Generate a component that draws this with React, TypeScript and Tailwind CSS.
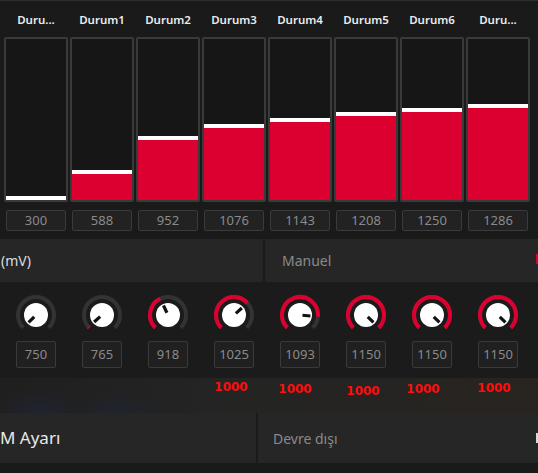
const bars = [
  { label: 'Duru...', value: 300 },
  { label: 'Durum1', value: 588 },
  { label: 'Durum2', value: 952 },
  { label: 'Durum3', value: 1076 },
  { label: 'Durum4', value: 1143 },
  { label: 'Durum5', value: 1208 },
  { label: 'Durum6', value: 1250 },
  { label: 'Duru...', value: 1286 },
];

const knobs = [750, 765, 918, 1025, 1093, 1150, 1150, 1150];

// red limit labels, slightly jittered like the original
const limits: { col: number; dx: string; dy: string }[] = [
  { col: 3, dx: '-ml-[6px]', dy: 'mt-[2px]' },
  { col: 4, dx: '-ml-[10px]', dy: 'mt-[4px]' },
  { col: 5, dx: '-ml-[6px]', dy: 'mt-[6px]' },
  { col: 6, dx: '-ml-[18px]', dy: 'mt-[4px]' },
  { col: 7, dx: '-ml-[8px]', dy: 'mt-[3px]' },
];

const font = "font-['Noto_Sans',sans-serif]";

function Knob({ value }: { value: number }) {
  const f = Math.max(0, Math.min(1, (value - 760) / 390));
  const r = 18;
  const c = 22;
  const polar = (deg: number, rad: number) => {
    const a = ((deg - 90) * Math.PI) / 180;
    return [c + rad * Math.cos(a), c + rad * Math.sin(a)];
  };
  const arc = (from: number, to: number) => {
    const [x1, y1] = polar(from, r);
    const [x2, y2] = polar(to, r);
    const large = to - from > 180 ? 1 : 0;
    return `M ${x1} ${y1} A ${r} ${r} 0 ${large} 1 ${x2} ${y2}`;
  };
  const start = -135;
  const end = start + 270 * f;
  const [px1, py1] = polar(end, 2.5);
  const [px2, py2] = polar(end, 10.5);
  return (
    <svg width="44" height="44" viewBox="0 0 44 44">
      <path d={arc(start, 135)} fill="none" stroke="#333333" strokeWidth="4" />
      {f > 0.005 && <path d={arc(start, Math.max(end, start + 3))} fill="none" stroke="#dc0030" strokeWidth="4" />}
      <circle cx={c} cy={c} r="12" fill="#ffffff" />
      <line x1={px1} y1={py1} x2={px2} y2={py2} stroke="#111" strokeWidth="3.2" strokeLinecap="butt" />
    </svg>
  );
}

export default function App() {
  return (
    <div className={`w-[538px] h-[473px] overflow-hidden bg-[#1a1a1a] ${font}`}>
      {/* bar chart */}
      <div className="border-t border-[#2e2e2e] bg-[#1a1a1a] px-[4px] pt-[11px] h-[239px]">
        <div className="grid grid-cols-[repeat(8,64px)] gap-x-[2px]">
          {bars.map((b, i) => (
            <div key={i} className="flex flex-col items-center">
              <div className="h-[16px] text-[11.5px] leading-[16px] font-semibold text-[#ececec]">{b.label}</div>
              <div className="mt-[9px] w-[64px] h-[165px] border-2 border-[#3a3a3a] rounded-[2px] bg-[#161616] flex flex-col justify-end">
                <div
                  className="w-full bg-[#dc0030] border-t-4 border-white"
                  style={{ height: `${(b.value - 262) * 0.0935}px` }}
                />
              </div>
              <div className="mt-[8px] w-[60px] h-[21px] border border-[#3a3a3a] rounded-[2px] bg-[#222222] flex items-center justify-center text-[13px] text-[#8a8a8a]">
                {b.value}
              </div>
            </div>
          ))}
        </div>
      </div>

      {/* mV row */}
      <div className="flex h-[43px] bg-[#262626]">
        <div className="w-[263px] flex items-center pl-[1px] text-[14px] text-[#dadde2]">(mV)</div>
        <div className="w-[2px] bg-[#1a1a1a]" />
        <div className="flex-1 flex items-center justify-between pl-[17px] text-[14px] text-[#8a8a8a]">
          <span>Manuel</span>
          <span className="w-[2px] h-[10px] bg-[#dc0030] mt-[-4px]" />
        </div>
      </div>

      {/* knobs */}
      <div className="h-[96px] bg-[#1b1b1b] px-[4px] pt-[11px]">
        <div className="grid grid-cols-[repeat(8,64px)] gap-x-[2px]">
          {knobs.map((k, i) => (
            <div key={i} className="flex flex-col items-center">
              <Knob value={k} />
              <div className="mt-[4px] w-[40px] h-[27px] border border-[#3a3a3a] rounded-[2px] bg-[#202020] flex items-center justify-center text-[13px] text-[#8a8a8a]">
                {k}
              </div>
            </div>
          ))}
        </div>
      </div>

      {/* limits strip */}
      <div className="h-[35px] px-[4px] bg-[radial-gradient(ellipse_45px_22px_at_40px_34px,#1f2430_0,transparent_100%),radial-gradient(ellipse_45px_22px_at_115px_36px,#1f2430_0,transparent_100%),linear-gradient(90deg,#1f1f1f,#242424_40%,#262422_75%,#29241f)]">
        <div className="grid grid-cols-[repeat(8,64px)] gap-x-[2px]">
          {Array.from({ length: 8 }).map((_, i) => {
            const l = limits.find((x) => x.col === i);
            return (
              <div key={i} className="flex justify-center">
                {l && (
                  <span className={`${l.dx} ${l.dy} font-['DejaVu_Sans',sans-serif] font-bold text-[12px] leading-[14px] text-[#ff0d0d]`}>
                    1000
                  </span>
                )}
              </div>
            );
          })}
        </div>
      </div>

      {/* bottom row */}
      <div className="flex h-[50px] bg-[#262626]">
        <div className="w-[256px] flex items-center text-[17px] text-[#e8e8e8]">M Ayarı</div>
        <div className="w-[2px] bg-[#1a1a1a]" />
        <div className="flex-1 flex items-center justify-between pl-[15px] text-[14px] text-[#8a8a8a]">
          <span>Devre dışı</span>
          <span className="w-[2px] h-[10px] bg-[#d8d8d8]" />
        </div>
      </div>
      <div className="h-[10px] bg-[#1a1a1a]" />
    </div>
  );
}
